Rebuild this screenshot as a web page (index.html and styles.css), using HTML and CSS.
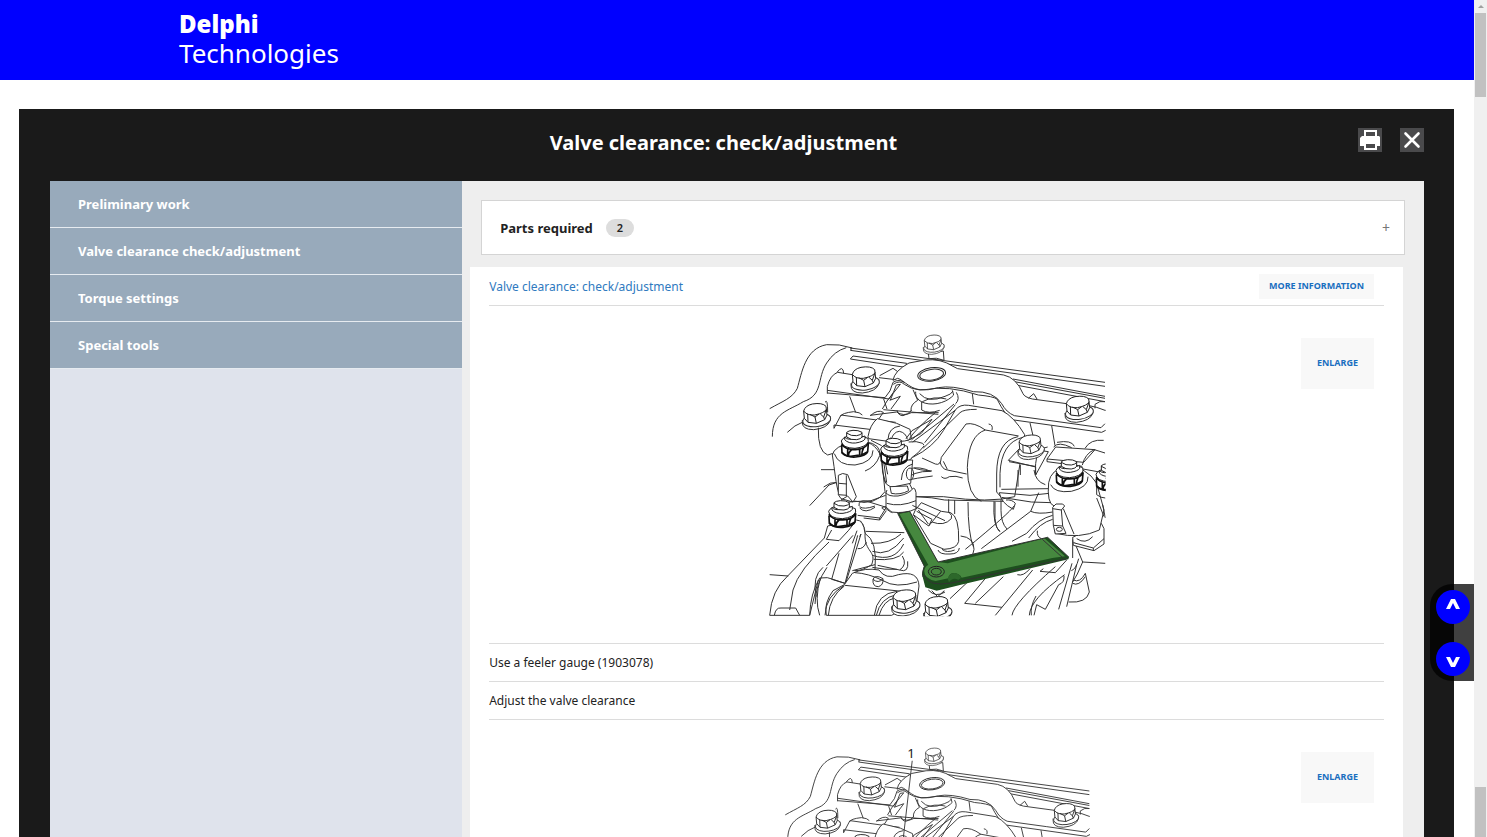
FILE: index.html
```html
<!DOCTYPE html>
<html lang="en">
<head>
<meta charset="utf-8">
<title>Valve clearance: check/adjustment</title>
<link rel="stylesheet" href="styles.css">
</head>
<body>
<div class="viewport">
  <div class="page">
    <header class="site-header">
      <a class="logo" href="#"><span class="logo-bold">Delphi</span><span class="logo-light">Technologies</span></a>
    </header>

    <main class="panel">
      <div class="panel-header">
        <h1 class="panel-title">Valve clearance: check/adjustment</h1>
        <div class="panel-actions">
          <button class="icon-button" type="button" aria-label="Print">
            <svg viewBox="0 0 24 24" width="24" height="24"><path d="M7 3h11v6H7z" fill="#4a4a4c" stroke="#fff" stroke-width="2"/><path d="M4 8h17l1 1v9h-3v-3H6v3H2v-8z" fill="#fff"/><path d="M7 15h11v6H7z" fill="#4a4a4c" stroke="#fff" stroke-width="2"/></svg>
          </button>
          <button class="icon-button" type="button" aria-label="Close">
            <svg viewBox="0 0 24 24" width="24" height="24"><path d="M5.500 5.500l13 13M18.500 5.500l-13 13" fill="none" stroke="#fff" stroke-width="2.600" stroke-linecap="round"/></svg>
          </button>
        </div>
      </div>

      <div class="panel-body">
        <nav class="side-nav">
          <a class="side-link" href="#">Preliminary work</a>
          <a class="side-link" href="#">Valve clearance check/adjustment</a>
          <a class="side-link" href="#">Torque settings</a>
          <a class="side-link" href="#">Special tools</a>
        </nav>

        <div class="content">
          <button class="accordion" type="button">
            <span class="accordion-label">Parts required</span>
            <span class="badge">2</span>
            <span class="accordion-plus">+</span>
          </button>

          <section class="card">
            <div class="row row-heading">
              <a class="topic-link" href="#">Valve clearance: check/adjustment</a>
              <button class="soft-button" type="button">MORE INFORMATION</button>
            </div>

            <div class="row row-figure">
              <svg class="drawing" viewBox="0 0 1032 882" role="img" aria-label="Feeler gauge placed under the valve adjusting screw">
                <defs>
                  <clipPath id="frame"><rect x="12" y="20" width="1010" height="854"/></clipPath>
                  <g id="bolt">
                    <path class="solid" d="M-42 14Q-44 38-8 38Q34 34 42 10L41-2Q30 20-4 24Q-34 24-42 10Z"/>
                    <ellipse class="solid" cy="9" rx="42" ry="20" transform="rotate(-8)"/>
                    <path class="solid bold" d="M-38-18Q-34-34-12-39Q18-44 29-32L32-6 25 8 0 19-25 16-36 4Z"/>
                    <path class="bold" d="M-38-18Q-28-4-5-6Q25-12 31-24M-26-10L-25 16M-19-8L-4 0 0 19M8-9L-4 0M12-9L22 0 25 8M29-20L22 0"/>
                  </g>
                  <g id="stud">
                    <path class="solid heavy" d="M-40 2L-39 24Q-24 38 2 36Q34 32 38 20L40-4Z"/>
                    <path class="solid bold" d="M-41-12Q-40 9 0 10Q34 6 40-10L39-20Q20-30-8-29Q-36-26-41-12Z"/>
                    <path class="solid bold" d="M-31-24V-16Q-20-4 2-6Q26-10 30-18V-27Q8-16-16-17Q-28-18-31-24Z"/>
                    <path class="solid bold" d="M-25-38V-24Q-12-14 5-16Q18-18 21-24V-38Q10-45-6-44Q-20-43-25-38ZM-25-36Q-12-26 5-28Q18-30 21-36"/>
                    <path class="heavy" d="M-40-4Q-32 14 2 14Q32 12 40-6M-22 10V32M-10 14Q-20 22-20 33M-10 14L14 12M14 12V34M26 8Q20 20 20 32M-39 22Q-30 34-12 34Q10 30 20 30L38 20"/>
                  </g>
                  <g id="head-upper">
                    <path d="M14 251C54 228 82 220 97 190C110 145 120 70 185 59Q222 56 262 69M22 335C22 262 70 258 115 230C176 210 155 160 185 114Q208 78 244 68M67 322Q88 300 116 290M256 69L1020 172M256 76L1020 184M258 68V76M264 93L425 115L421 127L256 102ZM744 162L1020 214M748 170L1020 220M752 180L1020 230"/>
                    <path d="M180 232Q188 218 188 262M216 142Q234 118 236 145M187 206V184Q196 150 218 142L262 149M342 158L392 164M187 196L372 222M187 204L360 218M344 152L384 130L404 144M360 218Q378 200 384 172Q402 160 420 174M372 222Q388 202 394 180L406 178L366 228L352 252M254 214L272 262M356 222L366 252M227 274Q230 264 266 260Q286 262 292 270M207 310L228 270L342 286L322 314L207 300ZM324 314L314 342Q312 318 332 296L355 262Q338 252 316 272M355 254L520 268M342 286L392 292M374 226L406 214L378 252M396 256Q400 272 414 272Q430 268 440 256M438 258Q436 238 458 226L444 194"/>
                    <path class="solid" d="M384 166Q388 138 432 114L480 105Q528 100 564 124L578 131L716 150Q754 158 774 206Q778 216 802 222L905 236Q974 236 1020 256H1030V312L1010 322L740 284Q720 270 696 222Q684 214 640 210Q548 180 480 194C440 200 416 164 398 160Z"/>
                    <path d="M385 178Q404 164 418 178Q456 206 520 188Q560 180 625 200Q686 198 710 236Q724 262 748 272Q880 290 1008 308L1020 296M790 220L806 206L816 222M990 250V238Q1004 226 1020 230M384 206L376 225"/>
                    <ellipse class="bold" cx="500" cy="148" rx="42" ry="20" transform="rotate(-8 500 148)"/><ellipse cx="500" cy="149" rx="36" ry="16" transform="rotate(-8 500 149)"/>
                    <path d="M452 200C448 245 530 250 566 210L562 196M464 206Q490 236 540 214Q560 208 564 198M472 230Q506 212 544 222M470 230V255Q490 268 524 256M574 202Q586 222 572 236M622 206L626 238"/>
                    <path class="solid" d="M490 84L492 101Q514 96 537 106L535 78Z"/>
                    <use href="#bolt" transform="translate(506 60) scale(.74)"/>
                    <use href="#bolt" x="300" y="166"/><use href="#bolt" x="154" y="276"/><use href="#bolt" x="942" y="254"/>
                  </g>
                </defs>
                <g clip-path="url(#frame)" class="ink">
                  <g id="head-block">
                    <use href="#head-upper"/>
                    <path d="M160 308Q158 380 188 390L208 384M168 434H208M222 448H252M176 486Q196 470 216 472M134 542L192 480L216 472M795 294L804 332M860 302L870 362M876 352Q920 344 928 364M960 370Q976 342 1016 346M708 470V556Q708 594 726 612M690 530V580Q692 608 704 620M616 360"/>
                    <g transform="translate(285 225)">
                      <path class="solid" d="M24 110Q30 74 52 56L110 70L150 88L154 116Q140 126 100 124Q92 104 84 124L26 116Z"/>
                      <path d="M84 118Q86 82 120 78M94 118Q100 96 118 94Q138 98 142 118M138 116L156 92L216 58L184 100L142 122M148 116Q170 84 226 38M30 46L110 36Q130 50 154 38L236 38M154 120L282 12M158 126L292 26M146 126Q170 122 188 130L192 136M192 138Q176 160 154 174"/>
                      <path class="solid" d="M158 172Q220 142 250 92L286 30Q300 12 326 16L426 32Q462 50 494 104L464 290Q390 310 250 290L168 290L142 238Q120 220 130 196Z"/>
                      <path d="M190 144L300 38Q310 28 350 28M286 14L194 128M186 174L226 192Q242 198 244 172L318 72Q342 66 376 90L476 108M376 90Q326 106 322 202Q322 288 364 304M474 110Q410 122 410 222V276L422 290M488 112Q424 128 420 220V262M386 72Q400 74 396 90M240 186Q246 208 262 210L320 222M250 184L262 208M128 244Q160 212 212 214Q178 198 150 206M244 230Q254 240 268 230Q288 226 308 234M134 242Q170 234 218 228M168 290Q220 292 254 300L430 304"/>
                      <path class="solid" d="M64 180Q60 250 94 262L152 250L158 180Z"/>
                      <path d="M72 192L80 248M124 240Q126 200 158 192"/><ellipse cx="150" cy="222" rx="11" ry="18"/><path d="M162 204Q176 210 216 213"/>
                      <path d="M266 298V366M284 300V342M324 306Q324 400 340 440M402 304Q398 380 420 394"/>
                      <path class="solid" d="M166 330L184 308L244 334L272 338Q298 350 296 424Q292 446 252 448L212 430L160 344Z"/>
                      <path d="M160 344L206 378L216 358L170 334M206 378L242 334M216 366Q252 380 274 356Q278 346 268 338M234 450Q238 464 270 462Q296 462 298 444M246 448Q260 460 284 450M302 408Q342 412 342 448L338 464"/>
                      <path class="solid" d="M90 260L94 280Q120 286 146 272L142 258Z"/>
                      <path class="solid" d="M78 278Q84 290 114 288Q148 282 160 264Q166 264 168 278V326Q140 342 92 336L78 326Z"/>
                      <path d="M80 310Q120 322 168 302M78 320Q54 322 76 330"/>
                    </g>
                    <path class="solid" d="M202 390C210 440 212 476 222 508L268 528Q330 544 360 500L350 400Q330 340 266 350Q206 364 202 390Z"/>
                    <path d="M208 386Q220 422 270 420Q324 412 324 376M302 350Q350 358 344 392Q332 426 300 438M318 346L350 362M350 406Q350 442 362 474M360 408L368 448"/>
                    <use href="#stud" x="270" y="360"/><use href="#stud" x="388" y="384"/>
                    <g transform="translate(0 435)">
                      <path class="solid" d="M220 16Q232 6 248 14L274 80L264 96L228 86L220 74ZM244 16V78M220 74L246 76M222 40L246 42M228 90L248 78L264 96"/>
                      <path d="M250 96Q280 94 318 92L362 76M362 70L366 60M282 108Q280 88 306 94L364 112L344 144L278 136M344 144V150L296 144M364 112L382 128M364 122L344 150M284 110Q296 120 330 108M284 114Q300 132 330 112M286 152Q304 172 300 210M302 184L418 188M442 106L540 152M460 120L490 162"/>
                      <path class="solid" d="M188 168L178 204L68 318Q20 360 14 436H134Q136 370 164 324Q190 320 204 328L240 340L330 300Q338 212 300 190Q296 150 274 150Z"/>
                      <path d="M184 208L200 180M184 208L222 212L250 182L272 154M192 216Q100 300 84 360L74 420M14 314L70 318M28 436Q32 412 48 414H92L104 436M184 288L264 196M222 250L200 328L240 340L278 196M240 346L288 192L284 200M154 380Q140 320 174 292M150 402Q152 340 186 292M262 220L276 182M278 236Q296 238 304 216M300 190C298 250 336 240 320 284Q290 304 268 302M318 220Q376 222 408 192M322 244Q372 262 416 204M322 256Q388 278 416 222M326 268Q398 274 416 246M338 286L404 300Q428 284 412 258M404 300Q432 310 428 274M322 292Q360 300 396 298"/>
                      <path class="solid" d="M262 310Q300 292 342 300Q362 330 400 314Q460 300 462 348L456 392L380 436H184Q176 400 204 362L238 344Z"/>
                      <path d="M180 436Q182 378 238 346M190 436Q194 380 238 348M240 346L430 366M270 308Q310 310 354 332Q392 356 456 336M328 436Q336 370 396 364M334 436Q346 384 394 374M342 436Q356 390 390 384M324 328Q322 350 340 350Q356 346 354 326Q330 312 324 328Q340 342 354 326M160 330L134 436M166 324Q148 390 164 436M262 302L330 284"/>
                      <use href="#stud" x="232" y="136"/>
                      <use href="#bolt" x="422" y="400"/><use href="#bolt" x="518" y="420"/>
                      <path d="M490 360Q512 384 540 366M500 362L518 380L538 362"/>
                    </g>
                    <g transform="translate(495 435)">
                      <path d="M208 68L300 76L358 70M214 58L354 56M214 82L304 96L364 98M326 68L302 124M208 68Q212 98 250 118L256 100Q246 88 228 90M252 108Q240 128 106 238M302 124L154 236M302 124Q324 134 368 126M368 136Q326 146 290 190L246 214M368 148Q330 158 296 204M322 182Q320 200 334 206M264 50V0M312 0Q316 34 346 44M60 386L130 320M104 400L172 318M136 400L220 320M104 400L216 412M196 436L308 300M246 436Q250 400 376 290M262 314Q280 320 300 296M330 304L376 308L410 270M340 296L330 304M298 436Q300 388 404 314M312 436L320 404L346 418L386 344Q404 338 402 318M318 378Q300 410 304 436M386 418L426 280M410 410L440 284M424 302Q438 298 446 266M458 276L526 280M430 208L458 276L442 312L428 336M428 208V264"/>
                      <path class="solid" d="M428 202L514 160L522 176V222L492 242L430 226ZM430 218L490 234L522 206M490 234V242"/>
                      <path d="M430 330Q450 340 466 310L478 366Q470 400 416 396M428 340Q446 350 466 320M440 206Q466 224 488 200"/>
                      <path class="solid" d="M356 38Q350 100 372 108L376 190Q450 208 508 180L522 120L500 40Q470-10 410-10Q362-2 356 38Z"/>
                      <path d="M362 44Q374 70 424 64Q476 52 474 20M500 20V74Q512 84 526 84M500 84L522 140M400 116L432 192M526 144L518 104"/>
                      <path class="solid" d="M368 112L378 102H398L404 108L394 120L398 168L408 190L376 192L370 166ZM368 116L394 120M370 166L398 168"/><ellipse cx="388" cy="178" rx="9" ry="6"/>
                    </g>
                    <path class="solid" d="M730 406L766 368L850 380L812 450V426Z"/>
                    <path d="M766 420L766 450M848 366Q806 372 812 450M732 410L810 424"/>
                    <use href="#bolt" transform="translate(798 368) scale(.94)"/>
                    <path class="solid" d="M846 402L872 366L990 374L956 412Z"/>
                    <path d="M846 402L846 410L952 424M866 366Q880 348 920 368M952 420Q960 386 988 374L1020 384M954 432L1020 444"/>
                    <use href="#stud" x="914" y="448"/><use href="#stud" x="1034" y="460"/>
                  </g>
                  <g>
                    <path class="plain" fill="#1d4f1e" d="M398 565L434 559L519 711L848 637L912 697L910 703L594 778L515 797L481 787L471 748L477 723Z"/>
                    <path class="plain" fill="#46883f" d="M403 566L434 560L518 711L548 715L838 640L900 694L862 699L590 758Q584 746 568 744Q552 744 550 760L512 768Q476 760 478 736Q480 724 490 720Z"/>
                    <path class="plain" fill="#2d682b" d="M548 761Q552 746 568 744Q584 746 588 759L580 764Q562 756 552 772Z"/>
                    <path d="M398 565L434 559L519 711L848 637L912 697M832 643L894 699M398 565L478 724Q470 740 474 756M478 750Q488 786 560 774L908 700"/>
                    <ellipse class="bold" cx="514" cy="740" rx="24" ry="16"/><ellipse class="bold" cx="514" cy="740" rx="15" ry="10"/>
                  </g>
                </g>
              </svg>
              <button class="soft-button soft-button-tall" type="button">ENLARGE</button>
            </div>

            <div class="row row-text">Use a feeler gauge (1903078)</div>
            <div class="row row-text">Adjust the valve clearance</div>

            <div class="row row-figure">
              <svg class="drawing drawing-small" viewBox="0 0 1032 882" role="img" aria-label="Valve adjusting screw, item 1">
                <g class="ink" clip-path="url(#frame)"><use href="#head-block"/><path d="M434 72L380 540"/></g>
                <text x="418" y="62" class="callout">1</text>
              </svg>
              <button class="soft-button soft-button-tall" type="button">ENLARGE</button>
            </div>
          </section>
        </div>
      </div>
    </main>
  </div>

  <div class="jump">
    <button class="jump-button" type="button" aria-label="Scroll up"><svg viewBox="0 0 34 34" width="34" height="34"><path d="M10 19h4l3-6 3 6h4l-5-10h-4z" fill="#fff"/></svg></button>
    <button class="jump-button" type="button" aria-label="Scroll down"><svg viewBox="0 0 34 34" width="34" height="34"><path d="M10 15h4l3 6 3-6h4l-5 10h-4z" fill="#fff"/></svg></button>
  </div>

  <div class="scrollbar" aria-hidden="true">
    <svg class="scroll-arrow" viewBox="0 0 13 13" width="13" height="13"><path d="M4 8h6L7 5z" fill="#a0a0a0"/></svg>
    <div class="thumb thumb-top"></div>
    <div class="thumb thumb-bottom"></div>
  </div>
</div>
</body>
</html>
```

FILE: styles.css
```css
* { box-sizing: border-box; }
body {
  margin: 0;
  font-family: "Noto Sans", "Open Sans", sans-serif;
  font-size: 12px;
  color: #222;
  background: #fff;
}
button { font-family: inherit; border: 0; padding: 0; cursor: pointer; }
a { text-decoration: none; }

.viewport { display: flex; height: 100vh; overflow: hidden; }
.page { flex: 1; min-width: 0; display: flex; flex-direction: column; }

.site-header { flex: none; background: #00f; padding: 8px 179px; }
.logo { display: flex; flex-direction: column; color: #fff; line-height: 29px; height: 64px; }
.logo-bold { font-size: 24px; font-weight: 900; line-height: 31px; }
.logo-light { font-size: 26px; }

.panel {
  flex: 1;
  min-height: 0;
  margin: 29px 20px 0 19px;
  padding: 0 30px 0 31px;
  background: #1a1a1a;
  display: flex;
  flex-direction: column;
}
.panel-header { flex: none; display: grid; grid-template-columns: 92px 1fr 92px; height: 72px; padding-top: 19px; }
.panel-title { grid-column: 2; margin: 0; padding-right: 27px; color: #fff; text-align: center; font-size: 20px; line-height: 30px; font-weight: 700; }
.panel-actions { display: flex; gap: 18px; justify-content: flex-end; }
.icon-button { width: 24px; height: 24px; background: #4a4a4c; }
.icon-button svg { display: block; }

.panel-body { flex: 1; min-height: 0; display: grid; grid-template-columns: 3fr 7fr; }
.side-nav { background: #dfe3ec; display: flex; flex-direction: column; overflow: hidden; }
.side-link {
  flex: none;
  padding: 0 28px;
  background: #98aabb;
  border-bottom: 1px solid #e6ebf0;
  color: #fff;
  font-size: 13px;
  line-height: 46px;
  font-weight: 700;
}

.content { background: #eee; overflow: hidden; padding: 19px 19px 0 8px; }
.accordion {
  display: flex;
  align-items: center;
  width: calc(100% - 11px);
  height: 55px;
  margin-left: 11px;
  padding: 0 14px 0 18px;
  background: #fff;
  border: 1px solid #d4d4d4;
  color: #222;
}
.accordion-label { font-size: 13px; font-weight: 700; }
.badge { margin-left: 13px; width: 28px; border-radius: 9px; background: #ddd; font-size: 11px; line-height: 18px; font-weight: 600; text-align: center; }
.accordion-plus { margin-left: auto; color: #777; font-size: 14px; }

.card { margin: 12px 2px 0 0; padding: 0 19px; background: #fff; }
.row { border-bottom: 1px solid #dcdcdc; }
.row-heading { display: flex; align-items: center; justify-content: space-between; height: 39px; padding-right: 10px; }
.topic-link { color: #2f7ac0; font-size: 12px; }
.soft-button { height: 25px; padding: 0 10px 2px; background: #f8f8f8; color: #1a6fc0; font-size: 9px; font-weight: 700; }
.soft-button-tall { width: 73px; height: 51px; padding: 0 0 2px; justify-self: end; margin: 13px 10px 0 0; }
.row-figure { display: grid; grid-template-columns: 1fr auto 1fr; align-items: start; padding: 19px 0 24px; }
.row-figure .drawing { grid-column: 2; width: 344px; display: block; }
.row-figure .drawing-small { width: 312px; }
.row-text { line-height: 37px; }

.ink, .ink path, .ink ellipse { stroke: #333; stroke-width: 3; stroke-linejoin: round; }
.ink { fill: none; }
.solid { fill: #fff; }
.bold, .ink .bold { stroke: #222; stroke-width: 3; }
.heavy { stroke: #111; stroke-width: 5; }
.ink .plain { stroke: none; }
.callout { font-family: "Noto Sans", sans-serif; font-size: 44px; fill: #222; }

.jump {
  position: fixed;
  right: 13px;
  bottom: 156px;
  display: flex;
  flex-direction: column;
  gap: 18px;
  padding: 6px 4px 5px 6px;
  background: rgba(0, 0, 0, .75);
  border-radius: 22px 0 0 22px;
}
.jump-button { width: 34px; height: 34px; border-radius: 50%; background: #00f; }
.jump-button svg { display: block; }

.scrollbar { flex: none; width: 13px; background: #f0f0f0; display: flex; flex-direction: column; align-items: center; }
.scroll-arrow { flex: none; }
.thumb { width: 11px; background: #c1c1c1; }
.thumb-top { height: 10%; }
.thumb-bottom { height: 6%; margin-top: auto; }
```
